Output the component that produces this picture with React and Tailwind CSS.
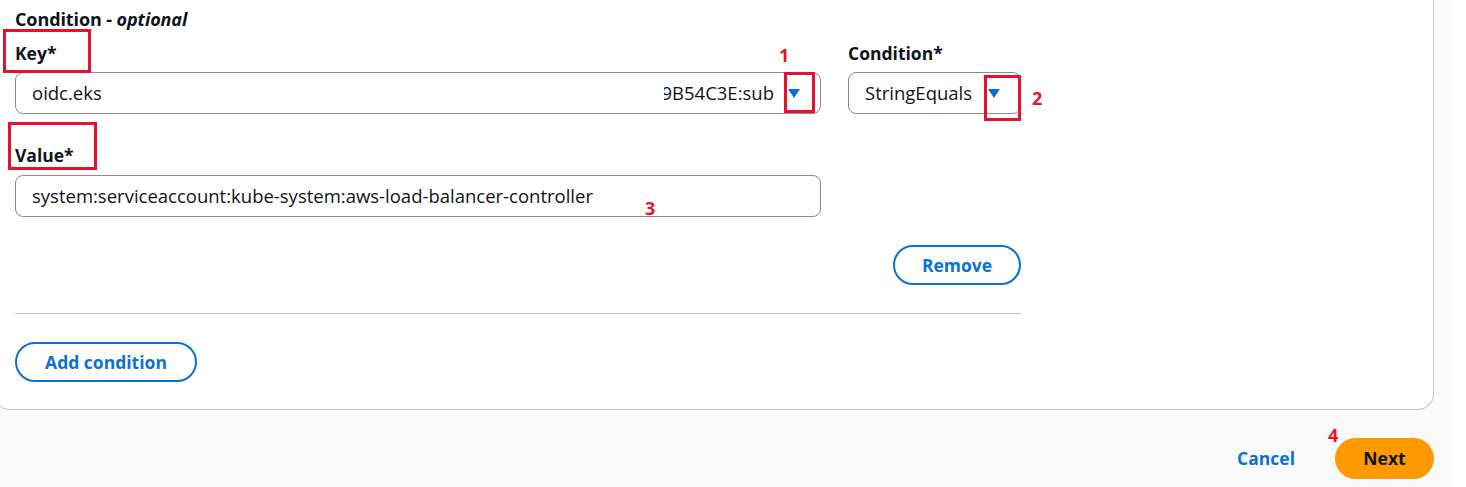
const Caret = ({ className }) => (
  <svg className={className} width="12" height="9" viewBox="0 0 12 9">
    <path d="M0 0 H12 L6 9 Z" fill="#0972d3" />
  </svg>
);

const Num = ({ children, className }) => (
  <span
    className={`absolute text-[18px] leading-none font-bold text-[#e8112d] ${className}`}
  >
    {children}
  </span>
);

const App = () => {
  return (
    <div
      className="relative flex w-[1466px] h-[487px] bg-white overflow-hidden text-[#0f141a]"
      style={{ fontFamily: '"Open Sans", "Noto Sans", sans-serif' }}
    >
      <div className="w-[1452px] bg-[#fafafa] flex flex-col">
        {/* Card */}
        <div className="-ml-[6px] w-[1440px] bg-white border border-t-0 border-[#c6c6cd] rounded-b-2xl pl-[20px] pt-[8px] pb-[27px]">
          <h3 className="text-[18px] leading-[22px] font-bold tracking-[-0.1px]">
            Condition - <i>optional</i>
          </h3>

          <div className="w-[1006px]">
            {/* Key + Condition */}
            <div className="flex gap-[27px] mt-[12px]">
              <div className="w-[806px]">
                <label className="block text-[17.5px] leading-[22px] font-bold">Key*</label>
                <div className="mt-[8px] h-[42px] border border-[#8c8c94] rounded-lg flex items-center pl-[16px] pr-[20px] text-[18.5px]">
                  <span className="flex-1">oidc.eks</span>
                  <span className="w-[110px] overflow-hidden flex justify-end whitespace-nowrap">
                    9B54C3E:sub
                  </span>
                  <Caret className="ml-[14px]" />
                </div>
              </div>
              <div className="w-[173px]">
                <label className="block text-[17.5px] leading-[22px] font-bold">Condition*</label>
                <div className="mt-[8px] h-[42px] border border-[#8c8c94] rounded-lg flex items-center pl-[16px] pr-[20px] text-[18.5px]">
                  <span className="flex-1 whitespace-nowrap">StringEquals</span>
                  <Caret />
                </div>
              </div>
            </div>

            {/* Value */}
            <div className="w-[806px] mt-[30px]">
              <label className="block text-[17.5px] leading-[22px] font-bold">Value*</label>
              <div className="mt-[9px] h-[42px] border border-[#8c8c94] rounded-lg flex items-center pl-[16px] text-[18.5px]">
                system:serviceaccount:kube-system:aws-load-balancer-controller
              </div>
            </div>

            <div className="flex justify-end mt-[28px]">
              <button className="w-[128px] h-[40px] rounded-full border-2 border-[#0972d3] text-[#0972d3] text-[17.5px] font-bold">
                Remove
              </button>
            </div>

            <div className="border-t border-[#c6c6cd] mt-[28px]" />

            <button className="mt-[28px] w-[182px] h-[40px] rounded-full border-2 border-[#0972d3] text-[#0972d3] text-[17.5px] font-bold">
              Add condition
            </button>
          </div>
        </div>

        {/* Footer */}
        <div className="flex justify-end items-center gap-[40px] mt-[28px] pr-[18px]">
          <button className="text-[#0972d3] text-[17.5px] font-bold">Cancel</button>
          <button className="w-[99px] h-[41px] rounded-full bg-[#ff9900] text-[#0f141a] text-[17.5px] font-bold">
            Next
          </button>
        </div>
      </div>

      {/* Annotations */}
      <div className="absolute left-[3px] top-[29px] w-[88px] h-[44px] border-[3px] border-[#e8112d]" />
      <div className="absolute left-[8px] top-[122px] w-[89px] h-[48px] border-[3px] border-[#e8112d]" />
      <div className="absolute left-[784px] top-[72px] w-[31px] h-[41px] border-[3px] border-[#e8112d]" />
      <div className="absolute left-[984px] top-[75px] w-[37px] h-[46px] border-[3px] border-[#e8112d]" />
      <Num className="left-[779px] top-[46px]">1</Num>
      <Num className="left-[1032px] top-[89px]">2</Num>
      <Num className="left-[645px] top-[199px]">3</Num>
      <Num className="left-[1328px] top-[426px]">4</Num>
    </div>
  );
};

export default App;
